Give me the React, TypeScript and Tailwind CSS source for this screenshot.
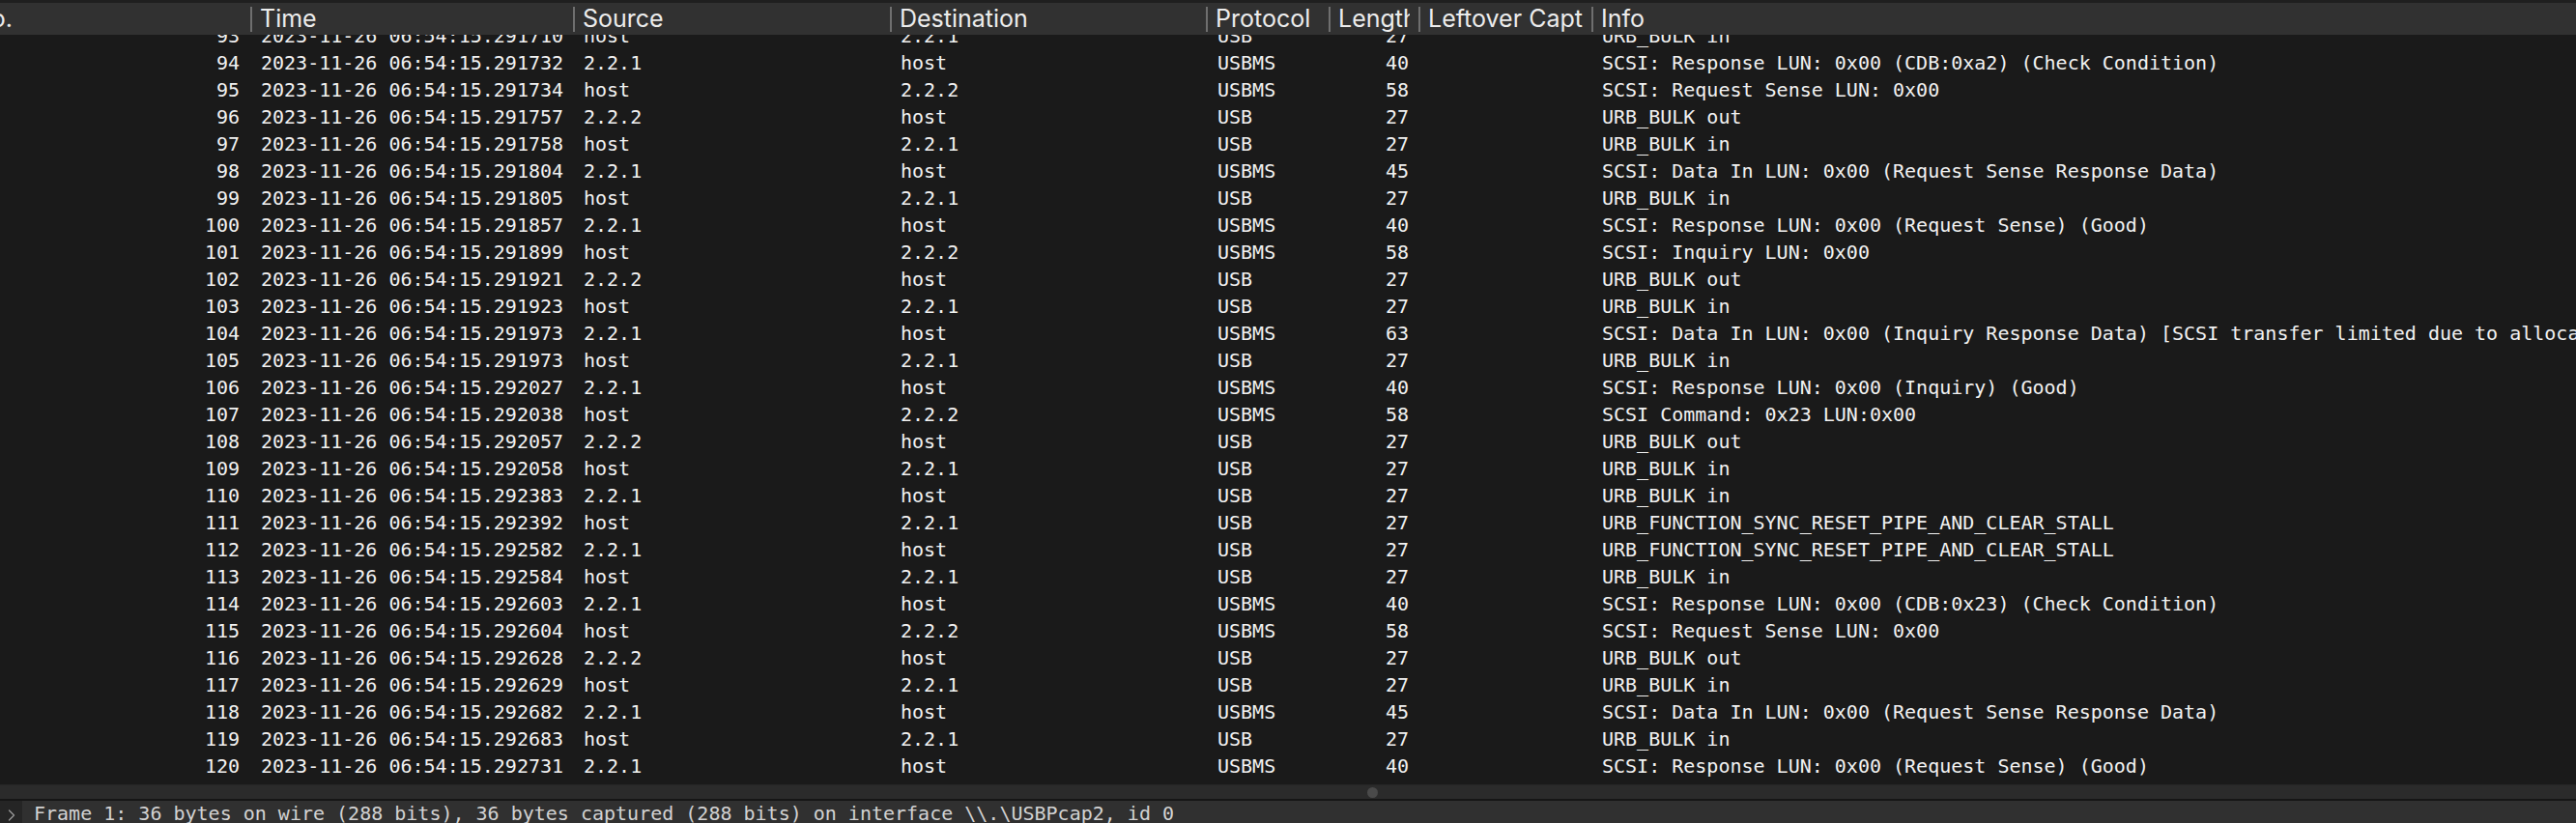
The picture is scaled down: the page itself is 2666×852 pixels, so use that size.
import { ChevronRight } from "lucide-react";

type Packet = {
  no: number;
  time: string;
  src: string;
  dst: string;
  proto: string;
  len: number;
  info: string;
};

const rows: [number, string, string, string, string, number, string][] = [
  [93, "291710", "host", "2.2.1", "USB", 27, "URB_BULK in"],
  [94, "291732", "2.2.1", "host", "USBMS", 40, "SCSI: Response LUN: 0x00 (CDB:0xa2) (Check Condition)"],
  [95, "291734", "host", "2.2.2", "USBMS", 58, "SCSI: Request Sense LUN: 0x00"],
  [96, "291757", "2.2.2", "host", "USB", 27, "URB_BULK out"],
  [97, "291758", "host", "2.2.1", "USB", 27, "URB_BULK in"],
  [98, "291804", "2.2.1", "host", "USBMS", 45, "SCSI: Data In LUN: 0x00 (Request Sense Response Data)"],
  [99, "291805", "host", "2.2.1", "USB", 27, "URB_BULK in"],
  [100, "291857", "2.2.1", "host", "USBMS", 40, "SCSI: Response LUN: 0x00 (Request Sense) (Good)"],
  [101, "291899", "host", "2.2.2", "USBMS", 58, "SCSI: Inquiry LUN: 0x00"],
  [102, "291921", "2.2.2", "host", "USB", 27, "URB_BULK out"],
  [103, "291923", "host", "2.2.1", "USB", 27, "URB_BULK in"],
  [104, "291973", "2.2.1", "host", "USBMS", 63, "SCSI: Data In LUN: 0x00 (Inquiry Response Data) [SCSI transfer limited due to allocation length]"],
  [105, "291973", "host", "2.2.1", "USB", 27, "URB_BULK in"],
  [106, "292027", "2.2.1", "host", "USBMS", 40, "SCSI: Response LUN: 0x00 (Inquiry) (Good)"],
  [107, "292038", "host", "2.2.2", "USBMS", 58, "SCSI Command: 0x23 LUN:0x00"],
  [108, "292057", "2.2.2", "host", "USB", 27, "URB_BULK out"],
  [109, "292058", "host", "2.2.1", "USB", 27, "URB_BULK in"],
  [110, "292383", "2.2.1", "host", "USB", 27, "URB_BULK in"],
  [111, "292392", "host", "2.2.1", "USB", 27, "URB_FUNCTION_SYNC_RESET_PIPE_AND_CLEAR_STALL"],
  [112, "292582", "2.2.1", "host", "USB", 27, "URB_FUNCTION_SYNC_RESET_PIPE_AND_CLEAR_STALL"],
  [113, "292584", "host", "2.2.1", "USB", 27, "URB_BULK in"],
  [114, "292603", "2.2.1", "host", "USBMS", 40, "SCSI: Response LUN: 0x00 (CDB:0x23) (Check Condition)"],
  [115, "292604", "host", "2.2.2", "USBMS", 58, "SCSI: Request Sense LUN: 0x00"],
  [116, "292628", "2.2.2", "host", "USB", 27, "URB_BULK out"],
  [117, "292629", "host", "2.2.1", "USB", 27, "URB_BULK in"],
  [118, "292682", "2.2.1", "host", "USBMS", 45, "SCSI: Data In LUN: 0x00 (Request Sense Response Data)"],
  [119, "292683", "host", "2.2.1", "USB", 27, "URB_BULK in"],
  [120, "292731", "2.2.1", "host", "USBMS", 40, "SCSI: Response LUN: 0x00 (Request Sense) (Good)"],
];

const packets: Packet[] = rows.map(([no, us, src, dst, proto, len, info]) => ({
  no,
  time: "2023-11-26 06:54:15." + us,
  src,
  dst,
  proto,
  len,
  info,
}));

function HeaderCell({ label, className }: { label: string; className: string }) {
  return (
    <div className={"flex h-full shrink-0 items-center overflow-hidden " + className}>
      <div className="h-[26px] w-[2px] shrink-0 bg-[#6f6f6f]" />
      <div className="mr-[9px] overflow-hidden whitespace-nowrap pl-[8px]">{label}</div>
    </div>
  );
}

export default function App() {
  return (
    <div className="flex h-[852px] w-[2666px] flex-col overflow-hidden bg-[#1a1a1a]">
      {/* column header */}
      <div className="flex h-[36px] shrink-0 items-center border-t-[3px] border-[#1f1f1f] bg-[#313131] font-['Inter',sans-serif] text-[25px] text-[#ececec]">
        <div className="ml-[-38px] flex h-full w-[297px] shrink-0 items-center overflow-hidden">
          <span className="whitespace-nowrap pl-[10px]">No.</span>
        </div>
        <HeaderCell label="Time" className="w-[334px]" />
        <HeaderCell label="Source" className="w-[328px]" />
        <HeaderCell label="Destination" className="w-[327px]" />
        <HeaderCell label="Protocol" className="w-[127px]" />
        <HeaderCell label="Length" className="w-[93px]" />
        <HeaderCell label="Leftover Capture Data" className="w-[179px]" />
        <HeaderCell label="Info" className="flex-1" />
      </div>

      {/* packet list */}
      <div className="h-[776px] shrink-0 overflow-hidden font-['DejaVu_Sans_Mono',monospace] text-[20px] text-[#f1f1f1]">
        <div className="mt-[-13px]">
          {packets.map((p) => (
            <div key={p.no} className="flex h-[28px] items-center whitespace-nowrap">
              <div className="w-[259px] shrink-0 pr-[11px] text-right">{p.no}</div>
              <div className="w-[334px] shrink-0 pl-[11px]">{p.time}</div>
              <div className="w-[328px] shrink-0 pl-[11px]">{p.src}</div>
              <div className="w-[327px] shrink-0 pl-[11px]">{p.dst}</div>
              <div className="w-[127px] shrink-0 pl-[12px]">{p.proto}</div>
              <div className="w-[93px] shrink-0 pr-[10px] text-right">{p.len}</div>
              <div className="w-[179px] shrink-0" />
              <div className="pl-[11px]">{p.info}</div>
            </div>
          ))}
        </div>
      </div>

      {/* splitter */}
      <div className="flex h-[15px] shrink-0 items-center border-t border-[#262626] bg-[#2b2b2b] pl-[1415px]">
        <div className="h-[11px] w-[11px] rounded-full bg-[#4a4a4a]" />
      </div>
      <div className="h-[2px] shrink-0 bg-[#161616]" />

      {/* packet details */}
      <div className="flex h-[23px] shrink-0 overflow-hidden bg-[#303030] font-['DejaVu_Sans_Mono',monospace] text-[20px] text-[#d2d2d2]">
        <div className="flex h-full w-[23px] shrink-0 items-start justify-center bg-[#252525] pt-[5px]">
          <ChevronRight size={20} strokeWidth={1.5} className="text-[#9a9a9a]" />
        </div>
        <div className="mt-[-1px] whitespace-nowrap pl-[12px] leading-[28px]">
          {"Frame 1: 36 bytes on wire (288 bits), 36 bytes captured (288 bits) on interface \\\\.\\USBPcap2, id 0"}
        </div>
      </div>
    </div>
  );
}
